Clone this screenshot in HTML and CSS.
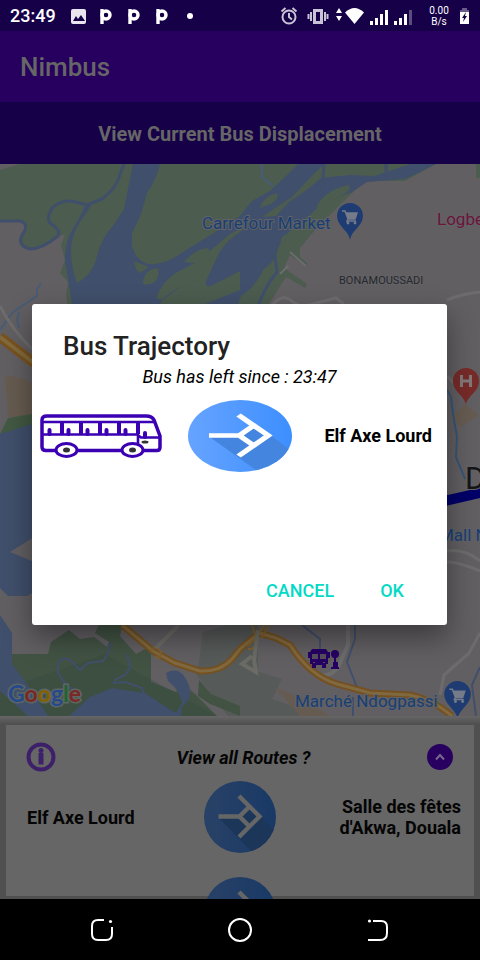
FILE: index.html
```html
<!DOCTYPE html>
<html lang="en">
<head>
<meta charset="utf-8">
<meta name="viewport" content="width=device-width, initial-scale=1">
<title>Nimbus</title>
<link rel="stylesheet" href="styles.css">
</head>
<body>
<svg class="defs" aria-hidden="true">
  <defs>
    <linearGradient id="blue" x1="0" x2="1" y1="0" y2="0">
      <stop offset="0" stop-color="#66a3ff"/><stop offset="1" stop-color="#3d8fff"/>
    </linearGradient>
    <clipPath id="disc"><circle cx="36" cy="36" r="36"/></clipPath>
    <symbol id="merge" viewBox="0 0 72 72" preserveAspectRatio="none">
      <circle cx="36" cy="36" r="36" fill="url(#blue)"/>
      <path clip-path="url(#disc)" d="M15 37 L47 70 L52 76 L80 60 L57 35 L45 24 L34 37Z" fill="#4486df"/>
      <path d="M46 28 L52 35 L46 42 L39 35Z" fill="#4486df"/>
      <path d="M14.500 35.500H35.500M35 15 L55.500 35.500 L35 56M45.500 25.500 L35.500 35.500 L45.500 45.500" fill="none" stroke="#fff" stroke-width="4.400"/>
    </symbol>
    <symbol id="cartpin" viewBox="0 0 26 37">
      <path d="M13 37C12 28 0 23 0 13a13 13 0 0 1 26 0c0 10-12 15-13 24z" fill="#1f3c72"/>
      <path d="M5 8h3l3 8h7l2-6H9M11 16l-1 2h9" fill="none" stroke="#757b88" stroke-width="1.500"/>
      <path d="M9 10h11l-2 6h-7z" fill="#757b88"/>
      <circle cx="11" cy="20" r="1.400" fill="#757b88"/><circle cx="18" cy="20" r="1.400" fill="#757b88"/>
    </symbol>
  </defs>
</svg>

<header class="status">
  <span class="clock">23:49</span>
  <svg class="notes" viewBox="0 0 126 20" aria-hidden="true">
    <rect x="1" y="3" width="15" height="15" rx="2" fill="#e8e5ee"/>
    <path d="M3 15l3-5 2 3 3-4 4 6z" fill="#160048"/>
    <g fill="none" stroke="#fff" stroke-width="3.400">
      <path d="M32 18V3"/><circle cx="36" cy="9" r="4"/>
      <path d="M60 18V3"/><circle cx="64" cy="9" r="4"/>
      <path d="M88 18V3"/><circle cx="92" cy="9" r="4"/>
    </g>
    <circle cx="120" cy="10" r="3" fill="#fff"/>
  </svg>
  <svg class="signals" viewBox="0 0 134 20" aria-hidden="true">
    <g fill="none" stroke="#c9c3d6" stroke-width="2">
      <circle cx="9" cy="11" r="6.500"/><path d="M9 7v4l3 2.500M1.500 5.500l4-3.500M16.500 5.500l-4-3.500"/>
      <rect x="34.500" y="4.500" width="7" height="12" stroke-width="3"/><path d="M31 6v9M45 6v9M28.500 8v5M47.500 8v5"/>
    </g>
    <path d="M59 2l3 5h-6zM59 15l3-5h-6z" fill="#fff"/>
    <path d="M65 6.500Q74.500-2.500 84 6.500L74.500 18z" fill="#fff"/>
    <path d="M90 15h3v4h-3zM95 12h3v7h-3zM100 8h3v11h-3zM105 4h3v15h-3zM114 15h3v4h-3zM119 12h3v7h-3zM124 8h3v11h-3z" fill="#fff"/>
    <path d="M129 4h3v15h-3z" fill="#5c4d80"/>
  </svg>
  <span class="rate">0.00<br>B/s</span>
  <svg class="battery" viewBox="0 0 9 16" aria-hidden="true">
    <path d="M2 0h5v2h2v14H0V2h2z" fill="#fff"/><path d="M2 0h5v2h2v2H0V2h2z" fill="#6a5d8b"/><path d="M6 4L2 10h2l-1 4 4-6H5z" fill="#160048"/>
  </svg>
</header>

<div class="stage">
  <header class="appbar"><h1>Nimbus</h1></header>
  <h2 class="subbar">View Current Bus Displacement</h2>

  <main class="map">
    <svg viewBox="0 164 480 552" preserveAspectRatio="xMidYMid slice" role="img" aria-label="Map of Douala">
      <rect y="164" width="480" height="552" fill="#625f63"/>
      <path fill="#4c5c4f" d="M0 170L20 164H436L405 181H365L350 195L315 230L300 248V257L307 263V267L290 255L284 268L307 284L305 288L286 277L265 310H68L66 295L68 282L60 273L65 260L61 245L65 235H57Q45 248 30 249Q18 246 20 237Q30 224 22 222H0ZM476 164h4v14h-4z"/>
      <g fill="#404f6b">
        <path d="M133 164H160Q157 178 147 193L141 214L132 233V246Q135 260 148 264Q165 266 186 250L214 233L240 216L252 201L270 191L285 177L298 164H324L307 181L292 197L275 208L262 217L276 216L289 202L308 189L321 178L350 175L375 176L398 168L411 164H436L420 172L405 179L367 182L352 192L322 203L309 216L296 225L282 239L276 253L265 272L258 304H205L240 290V271L213 285Q205 289 206 281L219 253Q227 240 240 232L250 224L230 234L205 255L210 258L195 275L163 300L160 304H72L69 285L65 260Q65 240 74 227L83 211Q83 205 92 204L87 212Q71 232 71 250Q71 268 77 283Q91 276 96 260Q101 238 113 226L124 209Z"/>
        <path d="M240 270L258 254L270 240L280 238L276 256L265 272L254 304H240Z"/>
      </g>
      <path fill="#4c5c4f" d="M134 261L149 267L140 273Q135 270 134 261zM143 284Q143 270 157 268Q161 272 156 281Q149 286 143 284zM184 262Q195 249 208 248Q212 255 208 264Q205 275 193 281Q177 286 162 300L156 298Q163 279 181 270L207 257L199 264ZM177 297Q185 283 199 280Q202 290 188 303H170ZM260 208Q263 196 277 193Q280 198 271 204zM316 208Q323 191 348 185Q354 189 342 195Q330 202 316 208zM281 243Q280 236 287 234Q292 236 281 243zM241 296Q256 286 263 270L272 262Q270 282 258 304H238z"/>
      <g fill="none" stroke="#404f6b" stroke-width="3">
        <path d="M0 221L20 221Q30 224 22 235Q17 246 30 249Q42 249 58 236Q62 231 50 223Q46 219 52 208Q60 200 72 201L87 205L102 199Q114 190 118 180L124 164M322 191L324 164M275 255L277 272Q266 285 258 306M386 177V164"/>
        <path stroke="#475c76" stroke-width="2" d="M262 164V177L273 186M16 310L37 296L37 289L41 283M0 330L12 313L22 306M19 312L17 320L19 328"/>
      </g>
      <path fill="none" stroke="#6c6c6d" stroke-width="3" d="M268 312q12-22 25-10l9 5 34-9 8 6M0 306Q12 330 32 349M447 376l10 10M447 551q17-3 33 10M447 562q12 0 33 9M440 695l4-20 25-22 11-20M447 300q14-6 33-8"/>
      <path fill="none" stroke="#6c6c6d" stroke-width="2" d="M290 252l16 14M280 274l8-8"/>
      <path fill="none" stroke="#6c6c6d" stroke-width="4" d="M348 625v20l-9 20q-5 10-18 11"/>
      <path fill="#665b50" d="M5 375l22 5 5 4v33H8zM453 417l12-13 14 11-18 12z"/>
      <g fill="none"><path d="M0 337L34 363" stroke="#79521d" stroke-width="10"/><path d="M0 337L34 363" stroke="#806a3d" stroke-width="4"/></g>
      <path fill="#425943" d="M8 418l24-4v15L0 434z"/>
      <path fill="#404f6b" d="M0 434L32 424V593L27 596H8L0 588z"/>
      <path fill="#625f63" d="M10 552L34 537V562z"/>
      <path fill="#425344" d="M10 654H48L51 642L69 630L80 639L94 637L107 647L109 642L95 633L99 625H122L120 636L136 654L151 646V682L176 692L181 682L195 694L217 716H0V650z"/>
      <path fill="#565a58" d="M203 632l25-7h30v91h-30l-31-40zM240 666l42 13-10 20 50 17h-82z"/>
      <path fill="#665b50" d="M275 688l25 9 30 19h-30z"/>
      <path fill="#384c3e" d="M105 654L217 716H0V690z" opacity=".4"/>
      <path fill="#425344" d="M199 680l12 14 29 12v10l-30-12-12-8z"/>
      <path fill="#404f6b" d="M0 615L12 633V664L24 680L48 716H28L0 691zM69 716L90 697L112 688L145 693L166 707L181 716zM166 673Q177 667 184 676Q194 691 188 700L181 708V716H174L182 703Q180 690 168 681z"/>
      <path fill="none" stroke="#404f6b" stroke-width="2" d="M110 642L109 652L103 661L88 663L80 670L74 664Q70 658 62 659Q55 665 59 675Q67 688 82 695M127 654l3 14-5 7-9 4-2 4 11-1 17 6 3 8M302 625l18 14v15M355 625v14l-8 23 11 28M353 697v19M480 667l-8 18 4 31"/>
      <path fill="none" stroke="#375575" stroke-width="2" d="M447 390l4 7 2 17 4 23-1 20 9 22"/>
      <g fill="none">
        <path d="M122 625L153 651L175 663L200 671Q220 672 232 659L240 649L259 633L276 638L290 645Q310 676 337 684L370 693L410 695Q432 699 452 716" stroke="#745122" stroke-width="7"/>
        <path d="M122 625L153 651L175 663L200 671Q220 672 232 659L240 649L259 633L276 638L290 645Q310 676 337 684L370 693L410 695Q432 699 452 716" stroke="#80693f" stroke-width="3"/>
        <path d="M151 652q3-9 10 0 0 9-6 4M264 625q-10 20-20 21M252 625q10 25-4 24M269 625l-8 14" stroke="#80602e" stroke-width="2"/>
        <path d="M179 625L156 648M258 630l-4 30 2 12-14-8 10-8" stroke="#6b6c66" stroke-width="4"/>
      </g>
      <path d="M440 502L484 492" stroke="#000068" stroke-width="10"/>
      <use href="#cartpin" x="337" y="203" width="26" height="37"/>
      <use href="#cartpin" x="444" y="681" width="27" height="38"/>
      <path d="M466 405c-1-9-13-13-13-24a13 13 0 0 1 26 0c0 11-12 15-13 24z" fill="#762b28"/>
      <path d="M461.500 375v12M470.500 375v12M461.500 381h9" stroke="#817879" stroke-width="3"/>
      <g fill="#260063">
        <path d="M312 649h14l2 3v12h-2v4h-4v-3h-6v3h-4v-4h-2v-12zM308 652h3v2h-1v4h-2zM327 652h3v6h-2v-4h-1zM331 654a4 4 0 0 1 8 0 4 4 0 0 1-3 4v4h2v5h1v2h-8v-2h2v-5h1v-4a4 4 0 0 1-3-4z"/>
        <path d="M312 654h6v5h-6zM320 654h6v5h-6zM313 662h2v1h-2zM323 662h2v1h-2z" fill="#56505c"/>
      </g>
      <g class="labels">
        <text class="shop" x="202" y="229">Carrefour Market</text>
        <text class="shop" x="295" y="707">Marché Ndogpassi</text>
        <text class="shop" x="439" y="541">Mall N</text>
        <text class="red" x="437" y="225">Logbe</text>
        <text class="area" x="339" y="284">BONAMOUSSADI</text>
        <text class="city" x="465" y="489">D</text>
        <text class="google" x="8" y="702"><tspan fill="#26498b">G</tspan><tspan fill="#7c2722">o</tspan><tspan fill="#846200">o</tspan><tspan fill="#26498b">g</tspan><tspan fill="#226332">l</tspan><tspan fill="#7c2722">e</tspan></text>
      </g>
    </svg>
  </main>

  <section class="sheet">
    <div class="card">
      <div class="head">
        <svg class="info" viewBox="0 0 30 30" aria-hidden="true"><circle cx="15" cy="15" r="12.500" fill="none" stroke="#3d2069" stroke-width="4"/><path d="M15 11v11.500" stroke="#3d2069" stroke-width="5"/><circle cx="15" cy="8.500" r="2.500" fill="#3d2069"/></svg>
        <p class="question">View all Routes ?</p>
        <button class="toggle" aria-label="Expand routes"><svg viewBox="0 0 26 26"><path d="M9 15.500l4-4.500 4 4.500" fill="none" stroke="#77698c" stroke-width="2"/></svg></button>
      </div>
      <div class="route">
        <span class="from">Elf Axe Lourd</span>
        <svg class="via"><use href="#merge" width="72" height="72"/></svg>
        <span class="to">Salle des fêtes d'Akwa, Douala</span>
      </div>
      <div class="route">
        <span></span>
        <svg class="via"><use href="#merge" width="72" height="72"/></svg>
        <span></span>
      </div>
    </div>
  </section>

  <div class="overlay">
    <section class="dialog" role="dialog" aria-labelledby="dlg">
      <h2 id="dlg">Bus Trajectory</h2>
      <p class="since">Bus has left since : 23:47</p>
      <div class="trip">
        <svg class="bus" viewBox="0 0 122 44" role="img" aria-label="Bus">
          <g fill="none" stroke="#3b00b3">
            <path d="M17 36.500H6Q2 36.500 2 33V6Q2 2 7 2H106Q112 2 114 6L120 22V33Q120 36.500 117 36.500H103M82 36.500H37" stroke-width="3.500"/>
            <path d="M3 8H115M3 20.500H97L101 23.500H120M98 8V34" stroke-width="2.600"/>
            <path d="M22 9v11M41 9v11M60 9v11M79 9v11M98 9v11" stroke-width="4"/>
            <path d="M9.500 20v-4M28.500 20v-4M47.500 20v-4M66.500 20v-4M85.500 20v-4M105 23v-4" stroke-width="4" stroke-linecap="round"/>
            <ellipse cx="26.500" cy="36" rx="10.500" ry="6.500" stroke-width="3" fill="#fff"/><ellipse cx="92.500" cy="36" rx="10.500" ry="6.500" stroke-width="3" fill="#fff"/>
          </g>
          <g fill="#333"><ellipse cx="26.500" cy="36" rx="3.500" ry="2.500"/><ellipse cx="92.500" cy="36" rx="3.500" ry="2.500"/><ellipse cx="105" cy="28" rx="3.500" ry="1.500"/></g>
        </svg>
        <svg class="arrow"><use href="#merge" width="104" height="72"/></svg>
        <strong>Elf Axe Lourd</strong>
      </div>
      <div class="actions"><button>CANCEL</button><button>OK</button></div>
    </section>
  </div>
</div>

<nav class="navbar">
  <button aria-label="Recent apps"><svg viewBox="0 0 24 24"><path d="M14 2H8Q2 2 2 8V16Q2 22 8 22H16Q22 22 22 16V9" fill="none" stroke="#fff" stroke-width="2"/><circle cx="20.500" cy="3.500" r="1.600" fill="#fff"/></svg></button>
  <button aria-label="Home"><svg viewBox="0 0 24 24"><circle cx="12" cy="12" r="11" fill="none" stroke="#fff" stroke-width="2"/></svg></button>
  <button aria-label="Back"><svg viewBox="0 0 24 24"><path d="M7 3H15Q21 3 21 9V15Q21 22 14 22H2" fill="none" stroke="#fff" stroke-width="2"/><circle cx="3.500" cy="3" r="1.600" fill="#fff"/></svg></button>
</nav>
</body>
</html>
```
FILE: styles.css
```css
* { box-sizing: border-box; margin: 0; padding: 0; }
body {
  min-height: 100vh;
  display: flex;
  flex-direction: column;
  background: #000;
  font-family: Roboto, sans-serif;
}
button { border: 0; background: none; font: inherit; color: inherit; }
svg { display: block; }
.defs { position: absolute; width: 0; height: 0; }

.status {
  display: flex;
  align-items: center;
  height: 31px;
  padding: 0 11px 0 10px;
  background: #160048;
  color: #fff;
}
.clock { font-size: 18px; font-weight: 500; }
.notes { width: 126px; height: 20px; margin-left: 14px; }
.signals { width: 134px; height: 20px; margin-left: auto; }
.rate { width: 34px; margin: 0 4px 0 8px; font-size: 10px; line-height: 11px; text-align: center; }
.battery { width: 9px; height: 16px; }

.stage { position: relative; flex: 1; display: flex; flex-direction: column; }
.appbar { padding: 21px 20px 19px; background: #27005f; color: #666; }
.appbar h1 { font-size: 26px; line-height: 31px; font-weight: 500; }
.subbar {
  padding: 21px 20px 19px;
  background: #160048;
  color: #666;
  font-size: 20px;
  line-height: 22px;
  font-weight: 700;
  text-align: center;
}

.map { position: relative; flex: 1; min-height: 240px; overflow: hidden; }
.map > svg { position: absolute; width: 100%; height: 100%; }
.labels text { paint-order: stroke; stroke: #626267; stroke-width: 2px; }
.shop { font-size: 17px; fill: #173f74; }
.red { font-size: 17px; fill: #6c1438; }
.area { font-size: 11px; fill: #262829; }
.city { font-size: 31px; fill: #161616; }
.labels .google { font: 700 23px Lato, sans-serif; stroke: #5c6664; stroke-width: 3px; }

.sheet {
  height: 183px;
  padding: 9px 6px 0;
  overflow: hidden;
  background: linear-gradient(#666, #505050 8px);
}
.card {
  height: 171px;
  padding: 17px 13px 0;
  background: #666;
  color: #050505;
}
.head { display: flex; align-items: center; justify-content: space-between; padding: 0 8px 0 7px; }
.info { width: 30px; height: 30px; }
.question { padding-left: 4px; font-size: 18px; font-weight: 700; font-style: italic; }
.toggle { width: 26px; height: 26px; border-radius: 50%; background: #270060; }
.route {
  display: grid;
  grid-template-columns: 1fr 72px 1fr;
  align-items: center;
  margin: 9px 0 24px;
  font-size: 18px;
  line-height: 21px;
  font-weight: 700;
}
.from { padding-left: 8px; }
.via { width: 72px; height: 72px; filter: brightness(.4); }
.to { justify-self: end; width: 130px; text-align: right; }

.overlay { position: absolute; inset: 0; display: grid; align-items: center; padding: 0 33px 2px 32px; }
.dialog {
  padding: 26px 8px 10px;
  border-radius: 3px;
  background: #fff;
  box-shadow: 0 12px 28px rgba(0, 0, 0, .4);
}
.dialog h2 { padding-left: 23px; font-size: 26px; line-height: 32px; font-weight: 500; color: #222; }
.since { font-size: 18px; line-height: 30px; font-style: italic; text-align: center; color: #000; }
.trip { display: grid; grid-template-columns: 1fr 104px 1fr; align-items: center; margin-top: 8px; }
.bus { width: 122px; height: 44px; }
.arrow { width: 104px; height: 72px; }
.trip strong { justify-self: end; padding-right: 7px; font-size: 18px; font-weight: 700; }
.actions { display: flex; justify-content: flex-end; gap: 14px; padding: 95px 19px 0 0; color: #03dac5; font-size: 18px; font-weight: 500; }
.actions button { height: 48px; padding: 0 16px; }

.navbar { display: flex; justify-content: space-around; align-items: center; height: 61px; padding: 0 33px; background: #000; }
.navbar svg { width: 24px; height: 24px; }
```
